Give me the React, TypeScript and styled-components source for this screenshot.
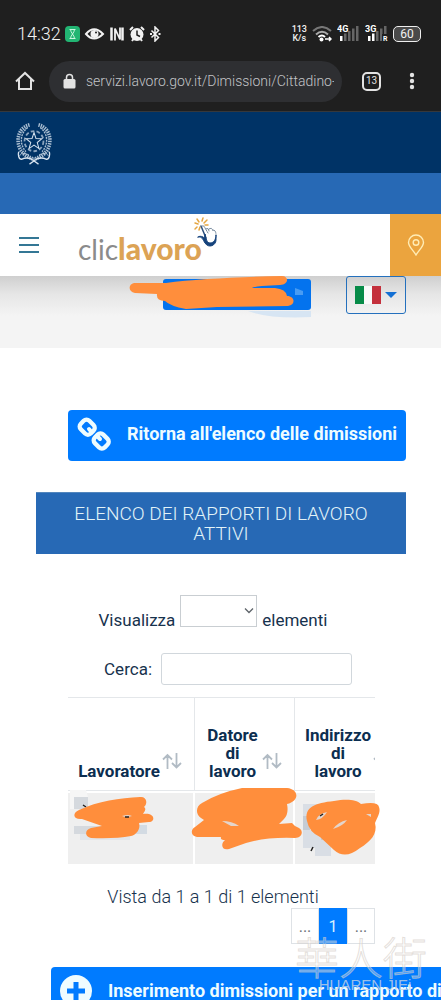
import React from "react";
import styled, { createGlobalStyle } from "styled-components";

const Global = createGlobalStyle`
  *, *::before, *::after { box-sizing: border-box; }
  html, body { margin: 0; padding: 0; }
  body { background: #fff; font-family: Roboto, "Open Sans", sans-serif; color: #17324d; }
  button, input, select { font: inherit; color: inherit; }
`;

const Screen = styled.div`
  display: flex;
  flex-direction: column;
  height: 100vh;
  overflow: hidden;
`;

const StatusBar = styled.div`
  display: flex;
  align-items: center;
  justify-content: space-between;
  flex: none;
  height: 53px;
  padding: 14px 20px 0 17px;
  background: #1f1f1f;
  color: #f2f2f2;
`;

const StatusGroup = styled.div<{ $gap: number }>`
  display: flex;
  align-items: center;
  gap: ${(p) => p.$gap}px;
`;

const Clock = styled.span`
  font-size: 18px;
  line-height: 20px;
  font-weight: 300;
`;

const Speed = styled.span`
  font-size: 9px;
  line-height: 9px;
  font-weight: 500;
  text-align: center;
`;

const Battery = styled.span`
  display: flex;
  align-items: center;
  justify-content: center;
  width: 28px;
  height: 16px;
  border: 1px solid #eee;
  border-radius: 5px;
  background: #4a4a4a;
  font-size: 12px;
  line-height: 12px;
`;

const AddressBar = styled.div`
  display: flex;
  align-items: center;
  flex: none;
  height: 59px;
  padding: 0 26px 2px 14px;
  background: #1f1f1f;
  border-bottom: 1px solid #36383b;
  color: #e3e3e3;
`;

const IconButton = styled.button`
  display: flex;
  align-items: center;
  justify-content: center;
  padding: 0;
  border: 0;
  background: none;
  cursor: pointer;
`;

const Url = styled.div`
  display: flex;
  align-items: center;
  gap: 10px;
  flex: 1;
  min-width: 0;
  height: 41px;
  margin: 0 20px 0 13px;
  padding: 0 8px 0 14px;
  border-radius: 21px;
  background: #2e2f32;
`;

const UrlText = styled.input`
  flex: 1;
  min-width: 0;
  padding: 0;
  border: 0;
  outline: 0;
  background: none;
  color: #c3c5c8;
  font-size: 14px;
  line-height: 20px;
  font-weight: 300;
`;

const TabCount = styled.button`
  width: 19px;
  height: 19px;
  margin-right: 28px;
  padding: 0;
  border: 2px solid #e3e3e3;
  border-radius: 5px;
  background: none;
  font-size: 10px;
  line-height: 14px;
`;

const Page = styled.div`
  flex: 1;
  min-height: 0;
  overflow: hidden;
`;

const StateBar = styled.div`
  height: 61px;
  padding: 10px 16px;
  background: #003366;
`;

const BlueBar = styled.div`
  height: 41px;
  background: #2769b5;
`;

const Header = styled.header`
  position: relative;
  display: flex;
  align-items: center;
  height: 62px;
  padding-left: 18px;
  background: #fff;
`;

const Logo = styled.a`
  position: relative;
  margin-left: 38px;
  padding-top: 6px;
  font-family: Lato, sans-serif;
  font-size: 28px;
  line-height: 32px;
  color: #8b8b8b;
  text-decoration: none;
  b { color: #dca355; font-size: 30px; font-weight: 900; }
  svg { position: absolute; left: 115px; top: -9px; }
`;

const PlaceButton = styled(IconButton)`
  width: 51px;
  height: 62px;
  margin-left: auto;
  background: #eba43e;
`;

const Tools = styled.div`
  display: flex;
  justify-content: flex-end;
  gap: 35px;
  height: 72px;
  padding: 0 35px;
  background: linear-gradient(#cfcfcf, #e6e6e6 18px, #f4f4f4 40px);
`;

const UserBox = styled.div`
  position: relative;
  padding-top: 3px;
  svg { position: absolute; left: -36px; top: -2px; }
`;

const UserButton = styled.button`
  display: block;
  width: 148px;
  height: 31px;
  border: 0;
  border-radius: 3px;
  background: #0473ee;
`;

const LanguageButton = styled(IconButton)`
  gap: 4px;
  width: 60px;
  height: 38px;
  border: 1px solid #2470bd;
  border-radius: 3px;
`;

const Flag = styled.span`
  width: 26px;
  height: 18px;
  background: linear-gradient(90deg, #078b48 0 33%, #fafafa 33% 66%, #c4303c 66%);
`;

const Caret = styled.span`
  border: 6px solid transparent;
  border-top-color: #1470d4;
  border-bottom: 0;
`;

const Main = styled.main`
  padding: 62px 35px 0 36px;
`;

const Action = styled.a<{ $wide?: boolean }>`
  display: flex;
  align-items: center;
  gap: 16px;
  height: 51px;
  padding: 0 9px 3px;
  margin-left: ${(p) => (p.$wide ? 15 : 32)}px;
  width: ${(p) => (p.$wide ? "max-content" : "auto")};
  border-radius: 4px;
  background: #007bff;
  color: #eefcff;
  font-size: 18px;
  line-height: 24px;
  font-weight: 700;
  text-decoration: none;
  white-space: nowrap;
  svg { flex: none; }
`;

const Title = styled.h1`
  margin: 31px 0 41px;
  padding: 11px 24px 10px;
  background: #2769b5;
  border-top: 1px solid #5286bd;
  color: #e2f3f8;
  font-size: 19px;
  line-height: 20px;
  font-weight: 300;
  text-align: center;
`;

const Block = styled.section`
  padding: 0 31px 0 32px;
`;

const LengthField = styled.label`
  display: flex;
  align-items: flex-end;
  justify-content: center;
  gap: 5px;
  margin-right: 17px;
  font-size: 17px;
  line-height: 14px;
`;

const SelectBox = styled.span`
  position: relative;
  display: flex;
  svg { position: absolute; right: 3px; top: 12px; pointer-events: none; }
`;

const Select = styled.select`
  appearance: none;
  width: 77px;
  height: 32px;
  border: 1px solid #c9ced2;
  border-radius: 0;
  background: #fff;
`;

const SearchField = styled.label`
  display: flex;
  align-items: center;
  justify-content: flex-end;
  gap: 9px;
  margin: 26px 23px 12px 0;
  font-size: 17px;
  line-height: 20px;
`;

const SearchInput = styled.input`
  width: 191px;
  height: 32px;
  border: 1px solid #d1d7dc;
  border-radius: 3px;
`;

const TableFrame = styled.div`
  position: relative;
`;

const TableClip = styled.div`
  overflow: hidden;
`;

const Table = styled.table`
  table-layout: fixed;
  width: 338px;
  border-spacing: 0;
  th {
    height: 94px;
    padding: 0 12px 10px 8px;
    border: solid #e4e7ea;
    border-width: 1px 1px 1px 0;
    vertical-align: bottom;
    color: #0c2e50;
    font-size: 17px;
    line-height: 18px;
    font-weight: 700;
  }
  td {
    height: 73px;
    border: solid #fff;
    border-width: 2px 2px 0 0;
    background: #efefef;
  }
`;

const HeadLabel = styled.div`
  display: flex;
  align-items: flex-end;
  span { flex: 1; white-space: pre; }
  svg { flex: none; margin-bottom: 10px; }
`;

const Scribbles = styled.svg`
  position: absolute;
  left: -8px;
  top: 83px;
`;

const Info = styled.p`
  margin: 22px 0 0;
  padding-right: 17px;
  font-size: 18px;
  line-height: 22px;
  font-weight: 300;
  text-align: center;
`;

const Pager = styled.nav`
  display: flex;
  justify-content: flex-end;
  margin-bottom: 23px;
`;

const PageButton = styled.button<{ $on?: boolean }>`
  width: 28px;
  height: 36px;
  padding: 0;
  border: 1px solid ${(p) => (p.$on ? "#007bff" : "#dee2e6")};
  background: ${(p) => (p.$on ? "#007bff" : "#fff")};
  color: ${(p) => (p.$on ? "#d9f1ff" : "#6b7178")};
  font-size: 16px;
  font-weight: 400;
`;

const Watermark = styled.div`
  position: absolute;
  right: 8px;
  bottom: 8px;
  display: flex;
  flex-direction: column;
  align-items: center;
  width: 144px;
  pointer-events: none;
`;

const WatermarkName = styled.span`
  font-family: "Noto Sans CJK TC", sans-serif;
  font-size: 44px;
  line-height: 42px;
  font-weight: 300;
  color: rgba(255, 255, 255, 0.3);
  -webkit-text-stroke: 1px rgba(210, 202, 196, 0.6);
`;

const WatermarkLatin = styled.span`
  padding-left: 8px;
  font-family: "Liberation Sans", sans-serif;
  font-size: 15px;
  line-height: 15px;
  color: rgba(200, 212, 226, 0.8);
`;

const Frame = styled.div`
  position: relative;
`;

const NotificationIcons = () => (
  <svg width="96" height="16" viewBox="0 0 96 16" fill="none" stroke="#f2f2f2">
    <rect x="0" y="0" width="15" height="16" rx="4" fill="#22b573" stroke="none" />
    <path d="M4.500 3.500h6M4.500 12.500h6M5.500 3.500c0 3 4 6 4 9M9.500 3.500c0 3-4 6-4 9" stroke="#c9f5df" />
    <path d="M21 8Q29 -1.500 38 8Q29 17 21 8Z" strokeWidth="2" />
    <circle cx="29.500" cy="8" r="4" fill="#f2f2f2" stroke="none" />
    <circle cx="31" cy="6.500" r="1" fill="#1f1f1f" stroke="none" />
    <path d="M46.500 1.500v13M57.500 1.500v13" strokeWidth="2.500" />
    <path d="M50 14.500V2.500l5 11V1.500" strokeWidth="1.800" />
    <circle cx="72" cy="8.500" r="6.500" fill="#f2f2f2" stroke="none" />
    <path d="M65 4l3-3M79 4l-3-3M67 15l1.500-2M77 15l-1.500-2" strokeWidth="2" />
    <path d="M72 4.500v4.500l3 1.500" stroke="#1f1f1f" strokeWidth="1.500" />
    <path d="M86.500 4.500l7 7-3.500 3.500V1l3.500 3.500-7 7" strokeWidth="1.500" />
    <path d="M85 8h2M93.500 8h2" strokeWidth="2" />
  </svg>
);

const Wifi = () => (
  <svg width="20" height="16" viewBox="0 0 20 16" fill="none" strokeWidth="2">
    <path d="M1 5Q10 -3 19 5" stroke="#777" />
    <path d="M4 8.500Q10 3 16 8.500" stroke="#aaa" />
    <path d="M6.500 11Q10 8 13 11" stroke="#fff" />
    <circle cx="9.500" cy="13.500" r="2" fill="#fff" />
    <path d="M13 13h6M17 11l2 2-2 2" stroke="#fff" strokeWidth="1.500" />
  </svg>
);

const Signal = ({ label, bars, roaming }: { label: string; bars: number; roaming?: boolean }) => (
  <svg width="23" height="17" viewBox="0 0 23 17">
    {[0, 1, 2, 3, 4].map((i) => (
      <rect key={i} x={3 + i * 4} y={11 - i * 2.5} width="2.500" height={5 + i * 2.5} fill={i < bars ? "#fff" : "#666"} />
    ))}
    <rect x="0" y="0" width="11" height="8" fill="#1f1f1f" />
    <text x="0" y="7" fontSize="9" fontWeight="700" fill="#fff">{label}</text>
    {roaming && <rect x="17" y="9" width="6" height="8" fill="#1f1f1f" />}
    {roaming && <text x="18" y="16" fontSize="7" fontWeight="700" fill="#fff">R</text>}
  </svg>
);

const HomeIcon = () => (
  <svg width="22" height="22" viewBox="0 0 22 22" fill="none" stroke="#e3e3e3" strokeWidth="2">
    <path d="M2 11.500L11 3l9 8.500M5 9.500V19h12V9.500" />
  </svg>
);

const LockIcon = () => (
  <svg width="13" height="16" viewBox="0 0 13 16">
    <rect x="0.500" y="6" width="12" height="9.500" rx="1.500" fill="#e3e3e3" />
    <path d="M3.500 6.500V4.500a3 3 0 0 1 6 0v2" fill="none" stroke="#e3e3e3" strokeWidth="1.500" />
  </svg>
);

const DotsIcon = () => (
  <svg width="6" height="18" viewBox="0 0 6 18" fill="#e3e3e3">
    <circle cx="3" cy="3" r="2.200" /><circle cx="3" cy="9" r="2.200" /><circle cx="3" cy="15" r="2.200" />
  </svg>
);

const star = "M20 11l2.200 6.200 6.600.2-5.200 4 1.900 6.400-5.500-3.700-5.500 3.700 1.900-6.400-5.200-4 6.600-.2Z";

const Emblem = () => (
  <svg width="36" height="44" viewBox="0 0 40 46" fill="none" stroke="#d6e2ee" preserveAspectRatio="none">
    <circle cx="20" cy="20" r="10.500" strokeWidth="2" strokeDasharray="4 2.500" opacity=".65" />
    <path d={star} strokeWidth="1.100" />
    <path d="M15 3C3 6 0 18 4 27c3 7 10 10 16 12" strokeWidth="4" strokeDasharray="1.500 1" opacity=".8" />
    <path d="M25 3c12 3 15 15 11 24-3 7-10 10-16 12" strokeWidth="4" strokeDasharray="1.500 1" opacity=".8" />
    <path d="M13 6C4 12 4 24 11 31M27 6c9 6 9 18 2 25" strokeWidth="1.500" strokeDasharray="2 1" opacity=".8" />
    <path d="M3 31c-1 3 0 8 3 8 5-2 9-2 13 1l6 4M37 31c1 3 0 8-3 8-5-2-9-2-13 1l-6 4" strokeWidth="1.500" />
    <path d="M4 35q5-4 11 0M36 35q-5-4-11 0" strokeDasharray="2 1" />
  </svg>
);

const MenuIcon = () => (
  <svg width="22" height="18" viewBox="0 0 22 18" stroke="#347795" strokeWidth="2">
    <path d="M1 2h20M1 9h20M1 16h20" />
  </svg>
);

const ClickHand = () => (
  <svg width="26" height="32" viewBox="0 0 26 32" fill="none" strokeLinecap="round">
    <path d="M5 7L2 6M6 5L4 2M9 4l1-3M11 6l3-3M4 10l-2 2M7 10l-1 3M12 8l3 0" stroke="#e5a642" strokeWidth="1.500" />
    <path d="M8 9l5 12" stroke="#2c4f7c" strokeWidth="1.500" />
    <path d="M9 9q2-1 3 2l3 5M13 12q2-2 3 2M16 12q3-2 4 2M20 13q3 0 3 5" stroke="#73879b" strokeWidth="1" strokeDasharray="2 1" />
    <path d="M5 20c4-1 5 3 7 6 4 6 11 2 11-3v-5c0 4-2 8-6 8-3 0-4-4-5-9 0 3-1 4-2 3-2-1-4-1-5 0Z" fill="#16437c" stroke="#16437c" />
  </svg>
);

const PinIcon = () => (
  <svg width="18" height="22" viewBox="0 0 18 22" fill="none" stroke="#ffecb5" strokeWidth="1.400">
    <path d="M9 21C6 16 1.500 12.500 1.500 8.500a7.500 7.500 0 0 1 15 0C16.500 12.500 12 16 9 21Z" />
    <circle cx="9" cy="8.500" r="2.800" />
  </svg>
);

const ChainIcon = () => (
  <svg width="34" height="36" viewBox="0 0 34 36" fill="none" stroke="#eefcff" strokeWidth="4.300">
    <rect x="3.200" y="5.200" width="14" height="12" rx="4" transform="rotate(45 10.200 11.200)" />
    <rect x="17.200" y="19" width="14" height="12" rx="4" transform="rotate(45 24.200 25)" />
    <path d="M12 13l2.500 3M20 20l3 3" strokeWidth="4" strokeLinecap="round" />
  </svg>
);

const PlusIcon = () => (
  <svg width="32" height="32" viewBox="0 0 32 32">
    <circle cx="16" cy="16" r="16" fill="#eefcff" />
    <path d="M16 7v18M7 16h18" stroke="#007bff" strokeWidth="5" />
  </svg>
);

const SortIcon = () => (
  <svg width="20" height="17" viewBox="0 0 20 17" fill="none" stroke="#b1bbc4" strokeWidth="1.800">
    <path d="M5.500 16V2M1 6.500L5.500 2 10 6.500M14.500 0v14M10 10l4.500 4.500L19 10" />
  </svg>
);

const columns = [
  { label: "Lavoratore", width: 127 },
  { label: "Datore\ndi\nlavoro", width: 100 },
  { label: "Indirizzo\ndi\nlavoro", width: 111 },
];

export default function App() {
  return (
    <>
      <Global />
      <Frame>
        <Screen>
          <StatusBar>
            <StatusGroup $gap={4}>
              <Clock>14:32</Clock>
              <NotificationIcons />
            </StatusGroup>
            <StatusGroup $gap={5}>
              <Speed>113<br />K/s</Speed>
              <Wifi />
              <Signal label="4G" bars={1} />
              <Signal label="3G" bars={2} roaming />
              <Battery>60</Battery>
            </StatusGroup>
          </StatusBar>
          <AddressBar>
            <IconButton aria-label="Home"><HomeIcon /></IconButton>
            <Url>
              <LockIcon />
              <UrlText aria-label="Indirizzo" defaultValue="servizi.lavoro.gov.it/Dimissioni/Cittadino-" />
            </Url>
            <TabCount>13</TabCount>
            <IconButton aria-label="Menu"><DotsIcon /></IconButton>
          </AddressBar>
          <Page>
            <StateBar><Emblem /></StateBar>
            <BlueBar />
            <Header>
              <IconButton aria-label="Apri menu"><MenuIcon /></IconButton>
              <Logo href="#">clic<b>lavoro</b><ClickHand /></Logo>
              <PlaceButton aria-label="Sedi"><PinIcon /></PlaceButton>
            </Header>
            <Tools>
              <UserBox>
                <UserButton aria-label="Utente" />
                <svg width="190" height="46" viewBox="127 274 190 46">
                  <path d="M248 311H311V317Q270 319 248 311Z" fill="#d7e5f3" />
                  <path d="M295 288l8 3v4h-8Z" fill="#499cf3" />
                  <path d="M134 283L166 283C195 279 240 277 282 276C289 276 289 285 280 285L262 286Q253 287 252 288L275 288Q286 289 287 296C295 296 296 305 288 306L217 307L186 309Q170 306 165 301Q156 301 157 294L135 293C128 292 128 284 134 283Z" fill="#ff8e3c" />
                </svg>
              </UserBox>
              <LanguageButton aria-label="Italiano"><Flag /><Caret /></LanguageButton>
            </Tools>
            <Main>
              <Action href="#"><ChainIcon />Ritorna all'elenco delle dimissioni</Action>
              <Title>ELENCO DEI RAPPORTI DI LAVORO ATTIVI</Title>
              <Block>
                <LengthField>
                  Visualizza
                  <SelectBox>
                    <Select />
                    <svg width="10" height="8" viewBox="0 0 10 8" fill="none" stroke="#5d6369" strokeWidth="1.300"><path d="M1 1.500l4 4 4-4" /></svg>
                  </SelectBox>
                  elementi
                </LengthField>
                <SearchField>Cerca:<SearchInput /></SearchField>
                <TableFrame>
                  <TableClip>
                    <Table>
                      <colgroup>
                        {columns.map((c) => <col key={c.label} width={c.width} />)}
                      </colgroup>
                      <thead>
                        <tr>
                          {columns.map((c) => (
                            <th key={c.label} scope="col"><HeadLabel><span>{c.label}</span><SortIcon /></HeadLabel></th>
                          ))}
                        </tr>
                      </thead>
                      <tbody><tr><td /><td /><td /></tr></tbody>
                    </Table>
                  </TableClip>
                  <Scribbles width="330" height="90" viewBox="60 780 330 90">
                    <path d="M70 790h16l2 7H74v12h-4Z" fill="#f6f6f6" />
                    <path d="M74 797h14v12H74ZM74 826h32v8H74Z" fill="#d5d9de" />
                    <path d="M135 825h12v9h-12Z" fill="#d3dbe3" /><path d="M80 834h50v6H80Z" fill="#e2e6eb" />
                    <path d="M303 804h16v12h-16ZM303 830h18v18h-18ZM315 838h16v18h-16Z" fill="#d9dee5" />
                    <path d="M303 816h7v14h-7ZM321 830h14v10h-14Z" fill="#c5ccd5" />
                    <path d="M83 805l3 2M311 851l2-4" stroke="#222" strokeWidth="1.500" />
                    <g fill="#ff8e3c">
                      <path d="M82 819C73 820 72 813 79 810C98 801 120 798 140 797C147 796 148 804 144 807C147 809 144 812 143 814C155 812 156 822 149 822L139 823C141 829 136 835 131 836Q115 839 91 838C85 837 84 830 91 828L102 826Z" />
                      <path d="M201 818C195 814 196 806 202 803Q218 793 242 788L287 788C299 789 300 801 287 804Q289 814 284 819L279 824L292 823Q295 827 299 828C304 831 302 838 295 838Q265 837 246 843L229 849C222 851 220 844 225 840Q220 840 221 837L197 837C191 836 190 830 195 827L204 820Z" />
                      <path d="M307 821C304 807 315 803 334 801C345 799 356 799 361 804Q378 801 379 807C381 812 377 818 375 823C378 834 370 842 360 848Q345 860 334 850L320 837Q309 832 307 821Z" />
                    </g>
                    <path d="M122 816q6-2 10 0q-6 2-10 0M252 811h16M222 821q10 0 17 5h-8ZM333 829q5-7 14-9q-4 6-14 9ZM316 820q2-6 11-8q-4 7-11 8ZM366 814h5v3Z" fill="#e4d5cc" />
                    <path d="M125 817h4M320 816l3-2" stroke="#222" strokeWidth="1.500" />
                  </Scribbles>
                </TableFrame>
                <Info>Vista da 1 a 1 di 1 elementi</Info>
                <Pager aria-label="Pagine">
                  <PageButton>...</PageButton>
                  <PageButton $on>1</PageButton>
                  <PageButton>...</PageButton>
                </Pager>
              </Block>
              <Action $wide href="#"><PlusIcon />Inserimento dimissioni per un rapporto di</Action>
            </Main>
          </Page>
        </Screen>
        <Watermark>
          <WatermarkName>華人街</WatermarkName>
          <WatermarkLatin>HUAREN JIEi</WatermarkLatin>
        </Watermark>
      </Frame>
    </>
  );
}
